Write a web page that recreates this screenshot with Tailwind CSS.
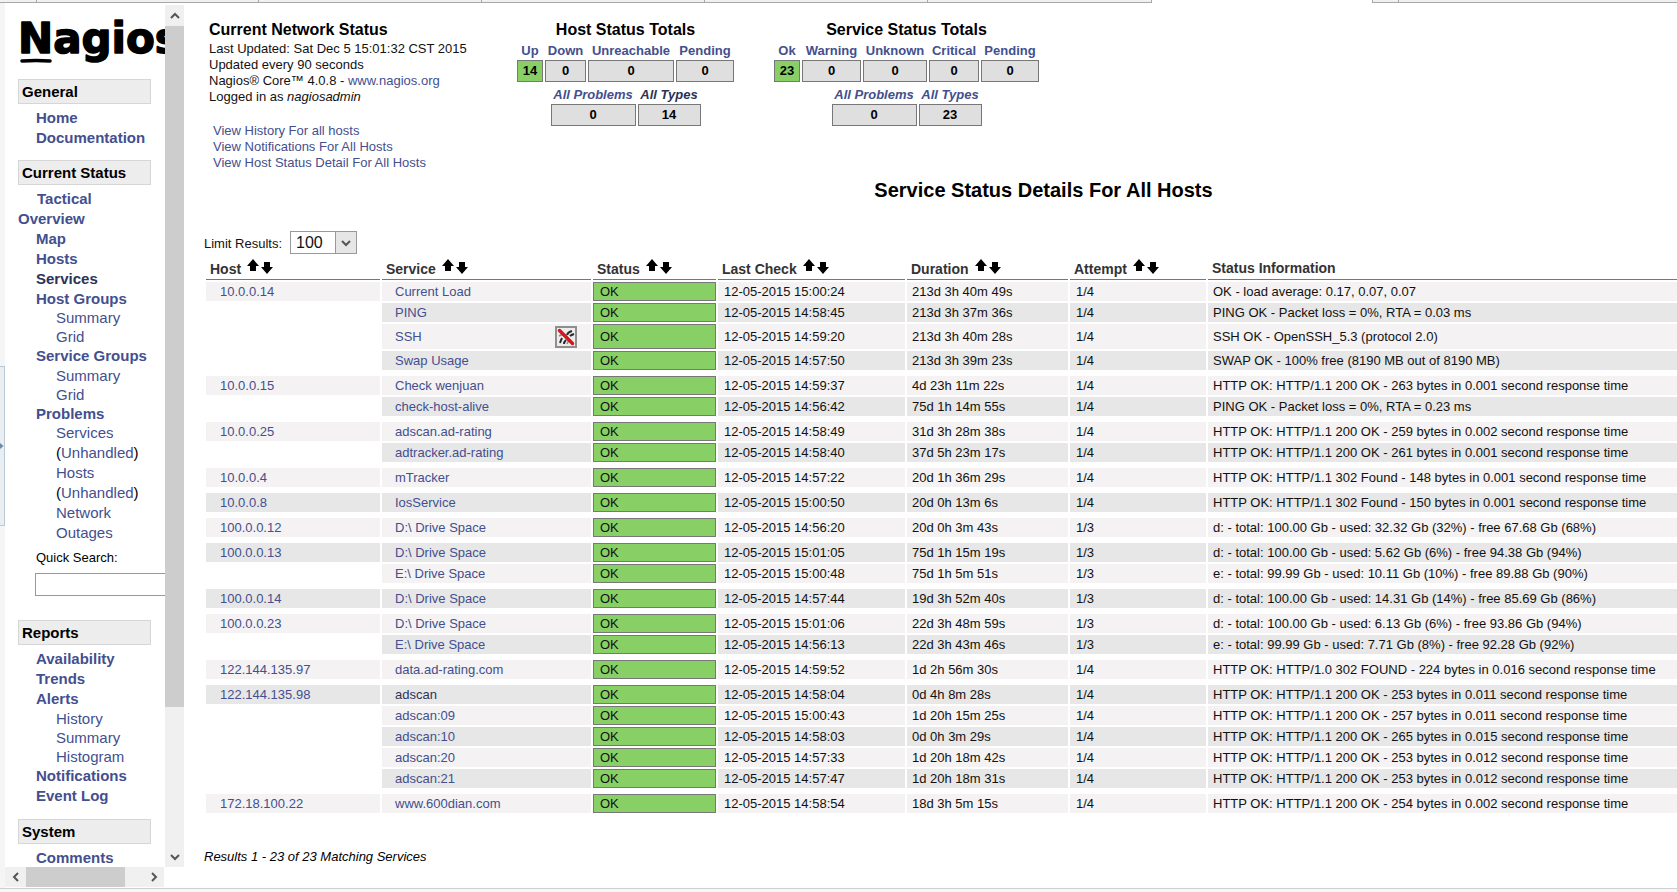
<!DOCTYPE html>
<html lang="en">
<head>
<meta charset="utf-8">
<title>Nagios Core</title>
<script src="https://cdn.jsdelivr.net/npm/@tailwindcss/browser@4"></script>
</head>
<body class="flex h-screen flex-col overflow-hidden bg-white font-['Liberation_Sans',Arial,sans-serif] text-[13px] leading-4 text-[#111]">

<svg class="hidden" aria-hidden="true">
  <symbol id="arrow-up" viewBox="0 0 12 12"><path d="M6 0 L12 7 H9 V12 H3 V7 H0 Z" fill="#000"/></symbol>
  <symbol id="arrow-down" viewBox="0 0 12 12"><path d="M6 12 L12 5 H9 V0 H3 V5 H0 Z" fill="#000"/></symbol>
  <symbol id="chevron" viewBox="0 0 10 10"><path d="M1 3 L5 7 L9 3" fill="none" stroke="#555" stroke-width="2"/></symbol>
</svg>

<!-- browser tab strip -->
<div class="flex h-[3px] shrink-0" aria-hidden="true">
  <div class="w-[37px] border-r border-b border-[#a8a8a8] bg-[#f0f0f0]"></div>
  <div class="w-[222px] border-r border-b border-[#a8a8a8] bg-[#f0f0f0]"></div>
  <div class="w-[223px] border-r border-b border-[#a8a8a8] bg-[#f0f0f0]"></div>
  <div class="w-[223px] border-r border-b border-[#a8a8a8] bg-[#f0f0f0]"></div>
  <div class="w-[223px] border-r border-b border-[#a8a8a8] bg-[#f0f0f0]"></div>
  <div class="w-[224px] border-r border-b border-[#a8a8a8] bg-[#f0f0f0]"></div>
  <div class="w-[220px] bg-white"></div>
  <div class="w-[27px] border-x border-b border-[#a8a8a8] bg-[#f0f0f0]"></div>
  <div class="flex-1 border-b border-[#a8a8a8] bg-[#f0f0f0]"></div>
</div>

<div class="flex min-h-0 flex-1">
  <!-- collapsed browser side panel -->
  <div class="flex w-[5px] shrink-0 flex-col justify-center bg-[#f5f5f5]">
    <button type="button" aria-label="Open side panel" class="flex h-40 w-[5px] items-center border-y border-r border-[#b9c8d3] bg-[#e9eef2]">
      <svg class="h-2 w-1" viewBox="0 0 4 8"><path d="M0 1 L3.500 4 L0 7 Z" fill="#6d8ba5"/></svg>
    </button>
  </div>

  <!-- side frame -->
  <div class="flex w-[179px] shrink-0 flex-col">
    <div class="flex min-h-0 flex-1">
      <nav class="w-40 shrink-0 overflow-hidden pl-[13px] text-[15px] font-bold leading-5 text-[#434f8e]">
        <a href="#" class="block w-48" aria-label="Nagios">
          <svg class="block h-[76px] w-48" viewBox="0 0 192 76">
            <text x="0" y="50" font-family="DejaVu Sans, sans-serif" font-weight="bold" font-size="42" fill="#000" stroke="#000" stroke-width="1.500" stroke-linejoin="round">Nagios</text>
            <path d="M4 58 Q18 57 32 58" fill="none" stroke="#000" stroke-width="3.500" stroke-linecap="round"/>
          </svg>
        </a>
        <h2 class="w-[133px] border border-[#d6d6d6] bg-[#ededed] py-[2px] pl-[3px] leading-[19px] text-black">General</h2>
        <ul class="w-[133px] pt-1 pb-3 pl-[18px]">
          <li><a href="#">Home</a></li>
          <li><a href="#">Documentation</a></li>
        </ul>
        <h2 class="w-[133px] border border-[#d6d6d6] bg-[#ededed] py-[2px] pl-[3px] leading-[19px] text-black">Current Status</h2>
        <ul class="w-[133px] pt-1">
          <li class="indent-[19px]"><a href="#">Tactical Overview</a></li>
          <li class="pl-[18px]"><a href="#">Map</a></li>
          <li class="pl-[18px]"><a href="#">Hosts</a></li>
          <li class="pl-[18px]"><a href="#" class="text-[#2b3358]">Services</a></li>
          <li class="pl-[18px] leading-[19px]"><a href="#">Host Groups</a>
            <ul class="pl-5 font-normal">
              <li><a href="#">Summary</a></li>
              <li><a href="#">Grid</a></li>
            </ul>
          </li>
          <li class="pl-[18px]"><a href="#">Service Groups</a>
            <ul class="pl-5 font-normal leading-[19px]">
              <li><a href="#">Summary</a></li>
              <li><a href="#">Grid</a></li>
            </ul>
          </li>
          <li class="pl-[18px] leading-[19px]"><a href="#">Problems</a>
            <ul class="pl-5 font-normal leading-5">
              <li><a href="#">Services</a> <span class="text-black">(</span><a href="#">Unhandled</a><span class="text-black">)</span></li>
              <li><a href="#">Hosts</a> <span class="text-black">(</span><a href="#">Unhandled</a><span class="text-black">)</span></li>
              <li><a href="#">Network Outages</a></li>
            </ul>
          </li>
        </ul>
        <form class="w-48 pt-[5px] pb-6 pl-[17px] text-[13px] font-normal text-black">
          <label for="quick" class="block h-[25px] pl-px leading-5">Quick Search:</label>
          <input id="quick" type="text" class="block h-[23px] w-40 border border-[#999] bg-white px-1">
        </form>
        <h2 class="w-[133px] border border-[#d6d6d6] bg-[#ededed] py-[2px] pl-[3px] leading-[19px] text-black">Reports</h2>
        <ul class="w-[133px] pt-1 pb-[13px] pl-[18px]">
          <li><a href="#">Availability</a></li>
          <li><a href="#">Trends</a></li>
          <li><a href="#">Alerts</a>
            <ul class="pl-5 font-normal leading-[19px]">
              <li><a href="#">History</a></li>
              <li><a href="#">Summary</a></li>
              <li><a href="#">Histogram</a></li>
            </ul>
          </li>
          <li><a href="#">Notifications</a></li>
          <li><a href="#">Event Log</a></li>
        </ul>
        <h2 class="w-[133px] border border-[#d6d6d6] bg-[#ededed] py-[2px] pl-[3px] leading-[19px] text-black">System</h2>
        <ul class="w-[133px] pt-1 pl-[18px]">
          <li><a href="#">Comments</a></li>
        </ul>
      </nav>
      <!-- vertical scroll bar -->
      <div class="mt-0.5 flex w-[19px] flex-col bg-[#f0f0f0]">
        <button type="button" aria-label="Scroll up" class="flex h-[21px] items-center justify-center"><svg class="h-2.5 w-2.5 rotate-180"><use href="#chevron"/></svg></button>
        <div class="flex flex-1 flex-col"><div class="h-[83%] bg-[#cdcdcd]"></div></div>
        <button type="button" aria-label="Scroll down" class="flex h-[21px] items-center justify-center"><svg class="h-2.5 w-2.5"><use href="#chevron"/></svg></button>
      </div>
    </div>
    <!-- horizontal scroll bar -->
    <div class="mb-px flex h-5 w-[159px] bg-[#f0f0f0]">
      <button type="button" aria-label="Scroll left" class="flex w-[21px] items-center justify-center"><svg class="h-2.5 w-2.5 rotate-90"><use href="#chevron"/></svg></button>
      <div class="flex flex-1"><div class="w-[85%] bg-[#cdcdcd]"></div></div>
      <button type="button" aria-label="Scroll right" class="flex w-[21px] items-center justify-center"><svg class="h-2.5 w-2.5 -rotate-90"><use href="#chevron"/></svg></button>
    </div>
  </div>

  <!-- main frame -->
  <main class="min-w-0 flex-1 overflow-hidden pt-4 pl-5">
    <header class="flex h-[158px] items-start pl-[5px]">
      <section class="w-[306px]">
        <h1 class="h-[22px] text-base leading-[22px] font-bold text-black">Current Network Status</h1>
        <p>Last Updated: Sat Dec 5 15:01:32 CST 2015</p>
        <p>Updated every 90 seconds</p>
        <p>Nagios® Core™ 4.0.8 - <a href="#" class="text-[#434f8e]">www.nagios.org</a></p>
        <p>Logged in as <i>nagiosadmin</i></p>
        <ul class="pt-[18px] pl-1 text-[#434f8e]">
          <li><a href="#">View History For all hosts</a></li>
          <li><a href="#">View Notifications For All Hosts</a></li>
          <li><a href="#">View Host Status Detail For All Hosts</a></li>
        </ul>
      </section>

      <section class="mr-9 flex flex-col items-center font-bold">
        <h2 class="h-[22px] text-base leading-[22px] text-black">Host Status Totals</h2>
        <table class="table-fixed border-separate border-spacing-x-[2px] text-center">
          <thead><tr class="h-[19px] align-middle text-[#434f8e]">
            <th class="w-[26px]"><a href="#">Up</a></th><th class="w-[41px]"><a href="#">Down</a></th><th class="w-[86px]"><a href="#">Unreachable</a></th><th class="w-[58px]"><a href="#">Pending</a></th>
          </tr></thead>
          <tbody><tr class="h-[22px] text-black">
            <td class="border border-[#777] bg-[#88d066]">14</td><td class="border border-[#777] bg-[#dfdfdf]">0</td><td class="border border-[#777] bg-[#dfdfdf]">0</td><td class="border border-[#777] bg-[#dfdfdf]">0</td>
          </tr></tbody>
        </table>
        <table class="mt-[3px] table-fixed border-separate border-spacing-x-[2px] text-center">
          <thead><tr class="h-[19px] text-[#434f8e] italic">
            <th class="w-[85px] whitespace-nowrap"><a href="#">All Problems</a></th><th class="w-[63px]"><a href="#" class="text-[#2b3358]">All Types</a></th>
          </tr></thead>
          <tbody><tr class="h-[22px] text-black">
            <td class="border border-[#777] bg-[#dfdfdf]">0</td><td class="border border-[#777] bg-[#dfdfdf]">14</td>
          </tr></tbody>
        </table>
      </section>

      <section class="flex flex-col items-center font-bold">
        <h2 class="h-[22px] text-base leading-[22px] text-black">Service Status Totals</h2>
        <table class="table-fixed border-separate border-spacing-x-[2px] text-center">
          <thead><tr class="h-[19px] text-[#434f8e]">
            <th class="w-[26px]"><a href="#">Ok</a></th><th class="w-[59px]"><a href="#">Warning</a></th><th class="w-[64px]"><a href="#">Unknown</a></th><th class="w-[50px]"><a href="#">Critical</a></th><th class="w-[58px]"><a href="#">Pending</a></th>
          </tr></thead>
          <tbody><tr class="h-[22px] text-black">
            <td class="border border-[#777] bg-[#88d066]">23</td><td class="border border-[#777] bg-[#dfdfdf]">0</td><td class="border border-[#777] bg-[#dfdfdf]">0</td><td class="border border-[#777] bg-[#dfdfdf]">0</td><td class="border border-[#777] bg-[#dfdfdf]">0</td>
          </tr></tbody>
        </table>
        <table class="mt-[3px] table-fixed border-separate border-spacing-x-[2px] text-center">
          <thead><tr class="h-[19px] text-[#434f8e] italic">
            <th class="w-[85px] whitespace-nowrap"><a href="#">All Problems</a></th><th class="w-[63px]"><a href="#">All Types</a></th>
          </tr></thead>
          <tbody><tr class="h-[22px] text-black">
            <td class="border border-[#777] bg-[#dfdfdf]">0</td><td class="border border-[#777] bg-[#dfdfdf]">23</td>
          </tr></tbody>
        </table>
      </section>
    </header>

    <h2 class="h-[54px] pl-[206px] text-center text-xl leading-[26px] font-bold text-black">Service Status Details For All Hosts</h2>

    <form class="flex h-[23px] items-center">
      <label for="limit" class="w-[86px] pt-0.5">Limit Results:</label>
      <div class="relative">
        <select id="limit" class="block h-[23px] w-[67px] appearance-none border border-[#999] bg-white pl-[5px] text-base leading-5 text-[#111]"><option>100</option><option>50</option><option>250</option><option>All</option></select>
        <span class="pointer-events-none absolute inset-y-0 right-0 flex w-[22px] items-center justify-center border border-[#999] bg-[#e6e6e6]"><svg class="h-2.5 w-2.5"><use href="#chevron"/></svg></span>
      </div>
    </form>

    <div class="-mr-[2px]">
      <table class="w-full table-fixed border-separate border-spacing-[2px] text-left leading-[15px]">
        <colgroup><col class="w-[174px]"><col class="w-[209px]"><col class="w-[123px]"><col class="w-[187px]"><col class="w-[161px]"><col class="w-[136px]"><col></colgroup>
        <thead><tr id="head" class="h-6 text-[14px] text-[#333]"></tr></thead>
        <tbody id="rows"></tbody>
      </table>
    </div>
    <p class="pt-[30px] text-[13px] text-black italic leading-6">Results 1 - 23 of 23 Matching Services</p>
  </main>
</div>

<div class="h-1 shrink-0 border-t border-[#d0d0d0] bg-[#f7f7f7]"></div>

<script>
const sort = '<a href="#" aria-label="Sort ascending" class="pb-2"><svg class="h-3 w-3"><use href="#arrow-up"/></svg></a><a href="#" aria-label="Sort descending" class="pb-[5px]"><svg class="h-3 w-3"><use href="#arrow-down"/></svg></a>';
document.getElementById('head').innerHTML = ['Host', 'Service', 'Status', 'Last Check', 'Duration', 'Attempt'].map(t =>
  `<th class="border-b border-[#777] pl-1 align-bottom"><span class="flex items-end gap-[2px] whitespace-nowrap"><span class="pr-1 leading-[19px]">${t}</span>${sort}</span></th>`
).join('') + '<th class="border-b border-[#777] pl-1 align-bottom leading-[21px]">Status Information</th>';

const data = [
  ['10.0.0.14', 'Current Load', '12-05-2015 15:00:24', '213d 3h 40m 49s', '1/4', 'OK - load average: 0.17, 0.07, 0.07'],
  ['', 'PING', '12-05-2015 14:58:45', '213d 3h 37m 36s', '1/4', 'PING OK - Packet loss = 0%, RTA = 0.03 ms'],
  ['', 'SSH', '12-05-2015 14:59:20', '213d 3h 40m 28s', '1/4', 'SSH OK - OpenSSH_5.3 (protocol 2.0)'],
  ['', 'Swap Usage', '12-05-2015 14:57:50', '213d 3h 39m 23s', '1/4', 'SWAP OK - 100% free (8190 MB out of 8190 MB)'],
  ['10.0.0.15', 'Check wenjuan', '12-05-2015 14:59:37', '4d 23h 11m 22s', '1/4', 'HTTP OK: HTTP/1.1 200 OK - 263 bytes in 0.001 second response time'],
  ['', 'check-host-alive', '12-05-2015 14:56:42', '75d 1h 14m 55s', '1/4', 'PING OK - Packet loss = 0%, RTA = 0.23 ms'],
  ['10.0.0.25', 'adscan.ad-rating', '12-05-2015 14:58:49', '31d 3h 28m 38s', '1/4', 'HTTP OK: HTTP/1.1 200 OK - 259 bytes in 0.002 second response time'],
  ['', 'adtracker.ad-rating', '12-05-2015 14:58:40', '37d 5h 23m 17s', '1/4', 'HTTP OK: HTTP/1.1 200 OK - 261 bytes in 0.001 second response time'],
  ['10.0.0.4', 'mTracker', '12-05-2015 14:57:22', '20d 1h 36m 29s', '1/4', 'HTTP OK: HTTP/1.1 302 Found - 148 bytes in 0.001 second response time'],
  ['10.0.0.8', 'IosService', '12-05-2015 15:00:50', '20d 0h 13m 6s', '1/4', 'HTTP OK: HTTP/1.1 302 Found - 150 bytes in 0.001 second response time'],
  ['100.0.0.12', 'D:\\ Drive Space', '12-05-2015 14:56:20', '20d 0h 3m 43s', '1/3', 'd: - total: 100.00 Gb - used: 32.32 Gb (32%) - free 67.68 Gb (68%)'],
  ['100.0.0.13', 'D:\\ Drive Space', '12-05-2015 15:01:05', '75d 1h 15m 19s', '1/3', 'd: - total: 100.00 Gb - used: 5.62 Gb (6%) - free 94.38 Gb (94%)'],
  ['', 'E:\\ Drive Space', '12-05-2015 15:00:48', '75d 1h 5m 51s', '1/3', 'e: - total: 99.99 Gb - used: 10.11 Gb (10%) - free 89.88 Gb (90%)'],
  ['100.0.0.14', 'D:\\ Drive Space', '12-05-2015 14:57:44', '19d 3h 52m 40s', '1/3', 'd: - total: 100.00 Gb - used: 14.31 Gb (14%) - free 85.69 Gb (86%)'],
  ['100.0.0.23', 'D:\\ Drive Space', '12-05-2015 15:01:06', '22d 3h 48m 59s', '1/3', 'd: - total: 100.00 Gb - used: 6.13 Gb (6%) - free 93.86 Gb (94%)'],
  ['', 'E:\\ Drive Space', '12-05-2015 14:56:13', '22d 3h 43m 46s', '1/3', 'e: - total: 99.99 Gb - used: 7.71 Gb (8%) - free 92.28 Gb (92%)'],
  ['122.144.135.97', 'data.ad-rating.com', '12-05-2015 14:59:52', '1d 2h 56m 30s', '1/4', 'HTTP OK: HTTP/1.0 302 FOUND - 224 bytes in 0.016 second response time'],
  ['122.144.135.98', 'adscan', '12-05-2015 14:58:04', '0d 4h 8m 28s', '1/4', 'HTTP OK: HTTP/1.1 200 OK - 253 bytes in 0.011 second response time'],
  ['', 'adscan:09', '12-05-2015 15:00:43', '1d 20h 15m 25s', '1/4', 'HTTP OK: HTTP/1.1 200 OK - 257 bytes in 0.011 second response time'],
  ['', 'adscan:10', '12-05-2015 14:58:03', '0d 0h 3m 29s', '1/4', 'HTTP OK: HTTP/1.1 200 OK - 265 bytes in 0.015 second response time'],
  ['', 'adscan:20', '12-05-2015 14:57:33', '1d 20h 18m 42s', '1/4', 'HTTP OK: HTTP/1.1 200 OK - 253 bytes in 0.012 second response time'],
  ['', 'adscan:21', '12-05-2015 14:57:47', '1d 20h 18m 31s', '1/4', 'HTTP OK: HTTP/1.1 200 OK - 253 bytes in 0.012 second response time'],
  ['172.18.100.22', 'www.600dian.com', '12-05-2015 14:58:54', '18d 3h 5m 15s', '1/4', 'HTTP OK: HTTP/1.1 200 OK - 254 bytes in 0.002 second response time']
];

const muted = `<a href="#" aria-label="Notifications disabled"><svg class="block h-[22px] w-[22px]" viewBox="0 0 22 22">
  <rect x="1" y="1" width="20" height="20" fill="#ececec" stroke="#8f8f8f" stroke-width="2"/>
  <path d="M5 17 Q6 14 7 12 M9 18 Q9 16 11 14 M12 9 Q13 6 17 5 M15 10 Q16 9 19 8" fill="none" stroke="#2a2a2a" stroke-width="2"/>
  <path d="M4 10 L8 8 M14 14 L12 18" stroke="#888" stroke-width="1.500"/>
  <path d="M4.500 4.500 L17.500 17.500" stroke="#d8141c" stroke-width="3.500" stroke-linecap="round"/></svg></a>`;

document.getElementById('rows').innerHTML = data.map(([host, service, check, duration, attempt, info], i) => {
  const bg = i % 2 ? 'bg-[#e7e7e7]' : 'bg-[#f4f2f2]';
  const link = service === 'adscan' ? 'text-[#2b3358]' : 'text-[#434f8e]';
  const gap = host && i ? '<tr class="h-[2px]"><td colspan="7"></td></tr>' : '';
  return `${gap}<tr class="${service === 'SSH' ? 'h-[25px]' : 'h-[19px]'} whitespace-nowrap">
    <td class="${host ? bg : ''} pl-[14px]">${host ? `<a href="#" class="text-[#434f8e]">${host}</a>` : ''}</td>
    <td class="${bg} pr-[14px] pl-[13px]"><div class="flex items-center justify-between"><a href="#" class="${link}">${service}</a>${service === 'SSH' ? muted : ''}</div></td>
    <td class="border border-[#777] bg-[#88d066] pl-1.5">OK</td>
    <td class="${bg} pl-1.5">${check}</td>
    <td class="${bg} pl-[5px]">${duration}</td>
    <td class="${bg} pl-1.5">${attempt}</td>
    <td class="${bg} pl-[5px]">${info}</td></tr>`;
}).join('');
</script>
</body>
</html>
